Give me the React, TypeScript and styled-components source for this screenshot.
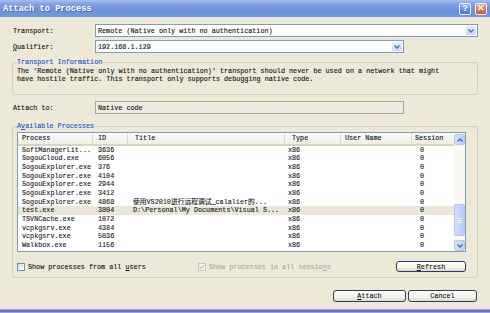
import React from "react";
import styled, { createGlobalStyle } from "styled-components";

const Global = createGlobalStyle`
  html, body { margin: 0; padding: 0; background: #ECE9D8; }
  body {
    font-family: "Liberation Mono", "Noto Sans CJK SC", monospace;
    font-size: 6.77px;
    line-height: 8px;
    color: #111;
    -webkit-text-stroke: 0.12px currentColor;
  }
  #root { width: 490px; height: 313px; overflow: hidden; }
`;

const Window = styled.div`
  width: 490px;
  height: 313px;
  display: flex;
  flex-direction: column;
  background: #ECE9D8;
`;

const TitleBar = styled.div`
  height: 17px;
  flex: none;
  display: flex;
  align-items: center;
  padding: 0 3px;
  box-sizing: border-box;
  background: linear-gradient(180deg, #A6C0F0 0%, #7FA1E4 25%, #6A91DD 65%, #7398E0 100%);
`;

const TitleText = styled.div`
  flex: 1;
  color: #fff;
  font-weight: bold;
  font-size: 8.7px;
  -webkit-text-stroke: 0;
  text-shadow: 1px 1px 0 rgba(30, 50, 120, 0.45);
`;

const CaptionButton = styled.div<{ $variant: "help" | "close" }>`
  width: 12px;
  height: 12px;
  margin-left: 4px;
  border: 1px solid #f4f6ff;
  border-radius: 2px;
  box-sizing: border-box;
  display: flex;
  align-items: center;
  justify-content: center;
  color: #fff;
  font-family: "Liberation Sans", sans-serif;
  font-weight: bold;
  font-size: 9px;
  line-height: 1;
  -webkit-text-stroke: 0;
  background: ${(p) =>
    p.$variant === "help"
      ? "linear-gradient(#8DB2F4, #4077E2)"
      : "linear-gradient(#F2A58A, #D8542F)"};
`;

const Body = styled.div`
  flex: 1;
  display: flex;
  flex-direction: column;
  padding: 7px 12px 0 12px;
`;

const FieldRow = styled.div<{ $mt?: number }>`
  display: flex;
  align-items: center;
  height: 13px;
  margin-top: ${(p) => p.$mt ?? 0}px;
`;

const Label = styled.div`
  width: 82px;
  padding-left: 1px;
  flex: none;
`;

const Combo = styled.div<{ $w: number }>`
  width: ${(p) => p.$w}px;
  height: 13px;
  box-sizing: border-box;
  border: 1px solid #7F9DB9;
  background: #fff;
  display: flex;
  align-items: center;
  padding-left: 2px;
`;

const ComboText = styled.div`
  flex: 1;
  white-space: pre;
  overflow: hidden;
`;

const DropButton = styled.div`
  width: 10px;
  height: 9px;
  margin-right: 1px;
  border-radius: 1px;
  background: linear-gradient(#E6EEFD, #C9D8F8);
  display: flex;
  align-items: center;
  justify-content: center;
`;

const ReadOnlyBox = styled.div<{ $w: number }>`
  width: ${(p) => p.$w}px;
  height: 13px;
  box-sizing: border-box;
  border: 1px solid #A5A59C;
  background: #EEECE2;
  display: flex;
  align-items: center;
  padding-left: 2px;
`;

const Group = styled.fieldset<{ $mt: number; $pt: number; $pb: number }>`
  margin: ${(p) => p.$mt}px 0 0 0;
  padding: ${(p) => p.$pt}px 11px ${(p) => p.$pb}px 4px;
  border: 1px solid #D0D0BF;
  border-radius: 3px;
  min-width: 0;
`;

const Legend = styled.legend`
  padding: 0;
  color: #2253C4;
  line-height: 8px;
`;

const InfoText = styled.div`
  white-space: pre;
  line-height: 8px;
`;

const List = styled.div`
  height: 120px;
  box-sizing: border-box;
  border: 1px solid #7F9DB9;
  background: #fff;
  display: flex;
`;

const TableArea = styled.div`
  flex: 1;
  overflow: hidden;
`;

const cols = "75px 35px 157px 56px 71px 42px";

const HeaderRow = styled.div`
  display: grid;
  grid-template-columns: ${cols};
  height: 12.6px;
  box-sizing: border-box;
  background: linear-gradient(#FBFBF8, #EFEDE4);
  border-bottom: 2px solid #D8D4C4;
`;

const HeaderCell = styled.div<{ $pl: number }>`
  padding-left: ${(p) => p.$pl}px;
  border-right: 1px solid #DDD9CB;
  display: flex;
  align-items: center;
  white-space: nowrap;
  overflow: hidden;
  &:last-child { border-right: none; }
`;

const Row = styled.div<{ $sel?: boolean }>`
  display: grid;
  grid-template-columns: ${cols};
  height: 8.7px;
  line-height: 8.7px;
  background: ${(p) => (p.$sel ? "#EAE7D8" : "transparent")};
`;

const Cell = styled.div<{ $pl?: number }>`
  padding-left: ${(p) => p.$pl ?? 4}px;
  white-space: pre;
  overflow: hidden;
  color: #1a1a1a;
`;

const ScrollBar = styled.div`
  width: 11px;
  flex: none;
  display: flex;
  flex-direction: column;
  background: #F8F7F2;
`;

const ScrollArrow = styled.div`
  height: 11px;
  margin-top: 1px;
  flex: none;
  border-radius: 2px;
  background: linear-gradient(90deg, #D4E1FA, #BCD0F6);
  border: 1px solid #B6C8EE;
  box-sizing: border-box;
  display: flex;
  align-items: center;
  justify-content: center;
`;

const Track = styled.div`
  flex: 1;
  display: flex;
  flex-direction: column;
  padding-top: 59px;
`;

const Thumb = styled.div`
  height: 32px;
  border-radius: 2px;
  box-sizing: border-box;
  border: 1px solid #B6C8EE;
  background: linear-gradient(90deg, #CFDDFA, #B9CDF5);
  display: flex;
  flex-direction: column;
  align-items: center;
  justify-content: center;
  gap: 1px;
`;

const Grip = styled.div`
  width: 5px;
  height: 1px;
  background: #EEF3FD;
`;

const OptionsRow = styled.div`
  display: flex;
  align-items: center;
  height: 11px;
  margin-top: 9px;
`;

const CheckOption = styled.div<{ $w?: number; $disabled?: boolean }>`
  display: flex;
  align-items: center;
  gap: 3px;
  ${(p) => (p.$w ? `width: ${p.$w}px;` : "flex: 1;")}
  color: ${(p) => (p.$disabled ? "#ACAA9D" : "#111")};
`;

const Box = styled.div<{ $disabled?: boolean }>`
  width: 8px;
  height: 8px;
  box-sizing: border-box;
  border: 1px solid ${(p) => (p.$disabled ? "#C9C7BA" : "#6F8FB0")};
  background: ${(p) =>
    p.$disabled ? "#F3F2EC" : "linear-gradient(135deg, #DCDCD5, #FFFFFF)"};
  display: flex;
  align-items: center;
  justify-content: center;
`;

const Button = styled.div<{ $w: number; $h: number }>`
  width: ${(p) => p.$w}px;
  height: ${(p) => p.$h}px;
  box-sizing: border-box;
  border: 1px solid #2B3B5E;
  border-radius: 3px;
  background: linear-gradient(#FFFFFF, #F3F2EC 60%, #DCD8CC);
  display: flex;
  align-items: center;
  justify-content: center;
  flex: none;
`;

const ButtonRow = styled.div`
  display: flex;
  justify-content: flex-end;
  gap: 2px;
  margin-top: 12px;
  padding-right: 1px;
`;

const BottomEdge = styled.div`
  height: 4px;
  flex: none;
  background: linear-gradient(#A9A9E2 0 1px, #6E6EC9 1px 3px, #A0A0DC 3px);
`;

const Key = styled.span`
  text-decoration: underline;
`;

const Chevron = ({ up }: { up?: boolean }) => (
  <svg width="6" height="4" viewBox="0 0 6 4">
    <path
      d={up ? "M0.5 3.5 L3 1 L5.5 3.5" : "M0.5 0.5 L3 3 L5.5 0.5"}
      fill="none"
      stroke="#4D6A9E"
      strokeWidth="1.3"
    />
  </svg>
);

const CheckMark = ({ color }: { color: string }) => (
  <svg width="6" height="6" viewBox="0 0 6 6">
    <path d="M0.8 3 L2.4 4.6 L5.2 1.2" fill="none" stroke={color} strokeWidth="1.2" />
  </svg>
);

type Proc = { name: string; id: string; title: string; sel?: boolean };

const procs: Proc[] = [
  { name: "SoftManagerLit...", id: "3636", title: "" },
  { name: "SogouCloud.exe", id: "6056", title: "" },
  { name: "SogouExplorer.exe", id: "376", title: "" },
  { name: "SogouExplorer.exe", id: "4104", title: "" },
  { name: "SogouExplorer.exe", id: "2944", title: "" },
  { name: "SogouExplorer.exe", id: "3412", title: "" },
  { name: "SogouExplorer.exe", id: "4868", title: "使用VS2010进行远程调试_calalier的..." },
  { name: "test.exe", id: "3804", title: "D:\\Personal\\My Documents\\Visual S...", sel: true },
  { name: "TSVNCache.exe", id: "1072", title: "" },
  { name: "vcpkgsrv.exe", id: "4384", title: "" },
  { name: "vcpkgsrv.exe", id: "5036", title: "" },
  { name: "Walkbox.exe", id: "1156", title: "" },
];

export default function App() {
  return (
    <>
      <Global />
      <Window>
        <TitleBar>
          <TitleText>Attach to Process</TitleText>
          <CaptionButton $variant="help">?</CaptionButton>
          <CaptionButton $variant="close">✕</CaptionButton>
        </TitleBar>
        <Body>
          <FieldRow>
            <Label>Transport:</Label>
            <Combo $w={383}>
              <ComboText>Remote (Native only with no authentication)</ComboText>
              <DropButton>
                <Chevron />
              </DropButton>
            </Combo>
          </FieldRow>
          <FieldRow $mt={3}>
            <Label>
              <Key>Q</Key>ualifier:
            </Label>
            <Combo $w={309}>
              <ComboText>192.168.1.129</ComboText>
              <DropButton>
                <Chevron />
              </DropButton>
            </Combo>
          </FieldRow>

          <Group $mt={5} $pt={1} $pb={11}>
            <Legend>Transport Information</Legend>
            <InfoText>
              The 'Remote (Native only with no authentication)' transport should never be used on a network that might
            </InfoText>
            <InfoText>
              have hostile traffic. This transport only supports debugging native code.
            </InfoText>
          </Group>

          <FieldRow $mt={6}>
            <Label>Attach to:</Label>
            <ReadOnlyBox $w={309}>Native code</ReadOnlyBox>
          </FieldRow>

          <Group $mt={8} $pt={2} $pb={5}>
            <Legend>
              A<Key>v</Key>ailable Processes
            </Legend>
            <List>
              <TableArea>
                <HeaderRow>
                  <HeaderCell $pl={4}>Process</HeaderCell>
                  <HeaderCell $pl={5}>ID</HeaderCell>
                  <HeaderCell $pl={7}>Title</HeaderCell>
                  <HeaderCell $pl={7}>Type</HeaderCell>
                  <HeaderCell $pl={4}>User Name</HeaderCell>
                  <HeaderCell $pl={3}>Session</HeaderCell>
                </HeaderRow>
                {procs.map((p, i) => (
                  <Row key={i} $sel={p.sel}>
                    <Cell>{p.name}</Cell>
                    <Cell $pl={5}>{p.id}</Cell>
                    <Cell $pl={5}>{p.title}</Cell>
                    <Cell $pl={3}>x86</Cell>
                    <Cell></Cell>
                    <Cell $pl={8}>0</Cell>
                  </Row>
                ))}
              </TableArea>
              <ScrollBar>
                <ScrollArrow>
                  <Chevron up />
                </ScrollArrow>
                <Track>
                  <Thumb>
                    <Grip />
                    <Grip />
                    <Grip />
                  </Thumb>
                </Track>
                <ScrollArrow>
                  <Chevron />
                </ScrollArrow>
              </ScrollBar>
            </List>
            <OptionsRow>
              <CheckOption $w={181}>
                <Box />
                <span>
                  Show processes from all <Key>u</Key>sers
                </span>
              </CheckOption>
              <CheckOption $disabled>
                <Box $disabled>
                  <CheckMark color="#C4C2B4" />
                </Box>
                <span>
                  Show processes in all sessio<Key>n</Key>s
                </span>
              </CheckOption>
              <Button $w={70} $h={11}>
                <span>
                  <Key>R</Key>efresh
                </span>
              </Button>
            </OptionsRow>
          </Group>

          <ButtonRow>
            <Button $w={73} $h={12}>
              <span>
                <Key>A</Key>ttach
              </span>
            </Button>
            <Button $w={69} $h={12}>
              Cancel
            </Button>
          </ButtonRow>
        </Body>
        <BottomEdge />
      </Window>
    </>
  );
}
